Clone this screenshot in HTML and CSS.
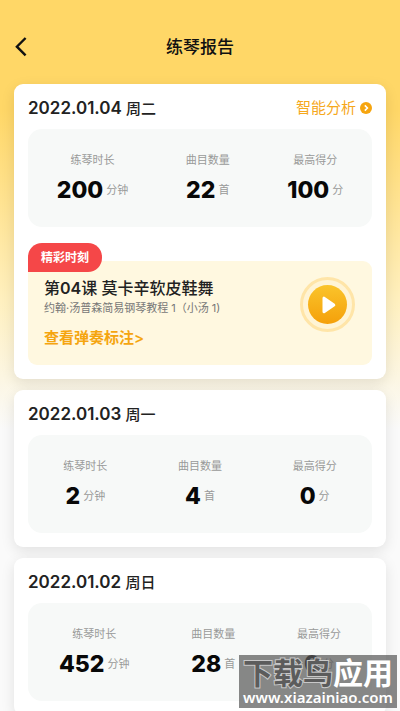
FILE: index.html
```html
<!DOCTYPE html>
<html lang="zh-CN">
<head>
<meta charset="utf-8">
<meta name="viewport" content="width=device-width, initial-scale=1">
<title>练琴报告</title>
<link rel="stylesheet" href="styles.css">
</head>
<body>
<div class="page">
  <header class="topbar">
    <button class="back" type="button" aria-label="返回">
      <svg width="12" height="20" viewBox="0 0 12 20"><path d="M10.600 1 1.900 9.700l8.700 8.700" fill="none" stroke="#111" stroke-width="2.4"/></svg>
    </button>
    <h1 class="title">练琴报告</h1>
  </header>
  <main class="list">
    <section class="card">
      <div class="card-head">
        <h2 class="date">2022.01.04 <span class="day">周二</span></h2>
        <a class="analysis" href="#analysis">智能分析
          <svg width="12" height="12" viewBox="0 0 12 12"><circle cx="6" cy="6" r="6" fill="#f6a50f"/><path d="M4.800 3.400 7.400 6 4.800 8.600" fill="none" stroke="#fff" stroke-width="1.6"/></svg>
        </a>
      </div>
      <dl class="stats">
        <div class="stat"><dt>练琴时长</dt><dd><b>200</b><span>分钟</span></dd></div>
        <div class="stat"><dt>曲目数量</dt><dd><b>22</b><span>首</span></dd></div>
        <div class="stat"><dt>最高得分</dt><dd><b>100</b><span>分</span></dd></div>
      </dl>
      <article class="moment">
        <span class="badge">精彩时刻</span>
        <div class="moment-text">
          <h3 class="lesson">第<span class="number">04</span>课 莫卡辛软皮鞋舞</h3>
          <p class="book">约翰·汤普森简易钢琴教程 1（小汤 1)</p>
          <a class="notes" href="#notes">查看弹奏标注&gt;</a>
        </div>
        <button class="play" type="button" aria-label="播放">
          <svg width="55" height="55" viewBox="0 0 55 55">
            <defs><linearGradient id="g" x1="0" y1="0" x2="0" y2="1"><stop offset="0" stop-color="#fac42b"/><stop offset="1" stop-color="#f5a00a"/></linearGradient></defs>
            <circle cx="27.5" cy="27.5" r="26" fill="#fff4d5" stroke="#ffe5a8" stroke-width="3"/>
            <circle cx="27.5" cy="27.5" r="19.5" fill="url(#g)"/>
            <path d="M24 21.200v13.600l9.800-6.800z" fill="#fff" stroke="#fff" stroke-width="3" stroke-linejoin="round"/>
          </svg>
        </button>
      </article>
    </section>
    <section class="card">
      <div class="card-head"><h2 class="date">2022.01.03 <span class="day">周一</span></h2></div>
      <dl class="stats">
        <div class="stat"><dt>练琴时长</dt><dd><b>2</b><span>分钟</span></dd></div>
        <div class="stat"><dt>曲目数量</dt><dd><b>4</b><span>首</span></dd></div>
        <div class="stat"><dt>最高得分</dt><dd><b>0</b><span>分</span></dd></div>
      </dl>
    </section>
    <section class="card">
      <div class="card-head"><h2 class="date">2022.01.02 <span class="day">周日</span></h2></div>
      <dl class="stats">
        <div class="stat"><dt>练琴时长</dt><dd><b>452</b><span>分钟</span></dd></div>
        <div class="stat"><dt>曲目数量</dt><dd><b>28</b><span>首</span></dd></div>
        <div class="stat"><dt>最高得分</dt><dd><b>0</b><span>分</span></dd></div>
      </dl>
    </section>
  </main>
  <aside class="watermark">
    <div class="mark-name"><span class="outlined">下载鸟</span>应用</div>
    <div class="mark-url">www.xiazainiao.com</div>
  </aside>
</div>
</body>
</html>
```
FILE: styles.css
```css
* { box-sizing: border-box; }

body {
  margin: 0;
  font-family: Inter, "Noto Sans CJK SC", sans-serif;
  color: #222;
}

h1, h2, h3, p, dl, dd { margin: 0; }

button {
  padding: 0;
  border: 0;
  background: none;
  cursor: pointer;
}

a { text-decoration: none; }
svg { display: block; }

.page {
  position: relative;
  height: 100vh;
  overflow: hidden;
  background: linear-gradient(#ffd767 0, #ffd767 110px, #fff0bf 300px, #fafafa 430px);
}

.topbar {
  display: grid;
  grid-template-columns: 1fr auto 1fr;
  align-items: center;
  height: 84px;
  padding: 9px 15px 0;
}

.back { justify-self: start; }

.title {
  font-size: 17px;
  line-height: 24px;
  font-weight: 500;
  color: #111;
}

.list {
  display: flex;
  flex-direction: column;
  gap: 11px;
  padding: 0 14px 14px;
}

.card {
  padding: 14px;
  border-radius: 9px;
  background: #fff;
  box-shadow: 0 4px 14px rgba(0, 0, 0, 0.1);
}

.card-head {
  display: flex;
  justify-content: space-between;
  align-items: center;
  height: 20px;
  margin-bottom: 11px;
}

.date {
  font-size: 17px;
  line-height: 20px;
  font-weight: 600;
}

.day {
  font-size: 15px;
  font-weight: 500;
}

.analysis {
  display: flex;
  align-items: center;
  gap: 4px;
  font-size: 15px;
  line-height: 20px;
  color: #f6a81c;
}

.stats {
  display: flex;
  justify-content: space-around;
  padding: 22px 0;
  border-radius: 14px;
  background: #f7f9f8;
}

.stat { text-align: center; }

.stat dt {
  margin-bottom: 6px;
  font-size: 11px;
  line-height: 18px;
  color: #999;
}

.stat dd {
  display: flex;
  justify-content: center;
  align-items: center;
  gap: 3px;
  height: 30px;
}

.stat b {
  font-size: 23px;
  line-height: 30px;
  font-weight: 800;
  color: #080808;
}

.stat span {
  font-size: 11px;
  line-height: 18px;
  color: #999;
}

.moment {
  position: relative;
  display: flex;
  justify-content: space-between;
  margin-top: 34px;
  padding: 16px 17px 17px 16px;
  border-radius: 9px;
  background: #fff8e0;
}

.badge {
  position: absolute;
  top: -18px;
  left: 0;
  padding: 0 13px;
  border-radius: 14px 14px 14px 0;
  background: #f54748;
  color: #fff;
  font-size: 12px;
  line-height: 29px;
  font-weight: 600;
}

.lesson {
  font-size: 16px;
  line-height: 23px;
  font-weight: 500;
}

.number { font-weight: 600; }

.book {
  margin-bottom: 12px;
  font-size: 11px;
  line-height: 16px;
  color: #777;
}

.notes {
  display: block;
  font-size: 15px;
  line-height: 20px;
  font-weight: 600;
  color: #f5a50f;
}

.play { align-self: flex-start; }

.watermark {
  position: absolute;
  right: 3px;
  bottom: 3px;
  padding: 4px 4px 2px;
  background: rgba(90, 90, 90, 0.72);
  color: #fff;
  text-align: center;
  white-space: nowrap;
}

.mark-name {
  font-size: 30px;
  line-height: 29px;
  font-weight: 700;
}

.outlined {
  color: #5c5c5c;
  -webkit-text-stroke: 2px #c8c8c8;
  paint-order: stroke fill;
}

.mark-url {
  font-family: "Noto Sans", sans-serif;
  font-size: 15px;
  line-height: 18px;
  font-weight: 600;
}
```
